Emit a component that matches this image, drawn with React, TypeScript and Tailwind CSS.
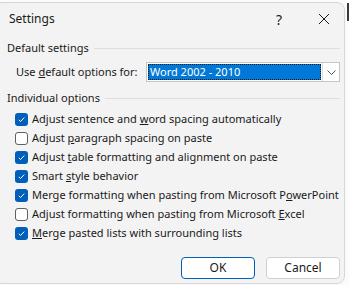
import React from "react";

const font = { fontFamily: '"Segoe UI", "Noto Sans", sans-serif' };

type Opt = { pre: string; key: string; post: string; checked: boolean };

const options: Opt[] = [
  { pre: "Adjust sentence and ", key: "w", post: "ord spacing automatically", checked: true },
  { pre: "Adjust ", key: "p", post: "aragraph spacing on paste", checked: false },
  { pre: "Adjust ", key: "t", post: "able formatting and alignment on paste", checked: true },
  { pre: "Smart ", key: "s", post: "tyle behavior", checked: true },
  { pre: "Merge formatting when pasting from Microsoft P", key: "o", post: "werPoint", checked: true },
  { pre: "Adjust formatting when pasting from Microsoft ", key: "E", post: "xcel", checked: false },
  { pre: "", key: "M", post: "erge pasted lists with surrounding lists", checked: true },
];

function Check({ on }: { on: boolean }) {
  if (!on)
    return (
      <span className="w-[13px] h-[13px] rounded-[3px] border border-[#5f5f5f] bg-white shrink-0" />
    );
  return (
    <span className="w-[13px] h-[13px] rounded-[3px] bg-[#005fb8] shrink-0 flex items-center justify-center">
      <svg width="9" height="9" viewBox="0 0 9 9">
        <path d="M1.8 4.8 L3.6 6.5 L7.2 2.6" fill="none" stroke="white" strokeWidth="1" />
      </svg>
    </span>
  );
}

function GroupTitle({ label }: { label: string }) {
  return (
    <div className="flex items-center h-[16px]">
      <span className="text-[11px] text-[#1a1a1a] whitespace-nowrap">{label}</span>
      <div className="flex-1 ml-[5px] h-px bg-[#dedede]" />
    </div>
  );
}

export default function App() {
  return (
    <div className="w-[349px] h-[285px] overflow-hidden bg-[#fbfbfb] relative" style={font}>
      <div className="absolute right-[0px] top-[3px] w-[2px] h-[18px] bg-[#3a3a3a]" />
      <div className="mt-[2px] ml-[-6px] w-[351px] h-[282px] rounded-[8px] border border-[#d6d6d6] bg-[#f3f3f3] pl-[12px] pr-[4px]">
        <div className="flex items-center h-[32px]">
          <span className="text-[12px] text-[#1a1a1a] ml-[2px]">Settings</span>
          <span className="ml-auto text-[14px] text-[#1a1a1a] mr-[36px]">?</span>
          <svg width="12" height="12" viewBox="0 0 12 12" className="mr-[10px]">
            <path d="M1 1 L11 11 M11 1 L1 11" stroke="#1a1a1a" strokeWidth="1" />
          </svg>
        </div>

        <div className="mt-[5px]">
          <GroupTitle label="Default settings" />
        </div>

        <div className="mt-[6px] flex items-center h-[20px] pl-[9px]">
          <span className="text-[11px] text-[#1a1a1a] whitespace-nowrap">
            Use <span className="underline">d</span>efault options for:
          </span>
          <div className="ml-auto w-[194px] h-[20px] border border-[#c6c6c6] bg-white flex items-stretch">
            <div className="flex-1 m-[1px] bg-[#0078d7] outline outline-1 outline-dotted outline-[#1a1a1a] -outline-offset-1 flex items-center pl-[2px]">
              <span className="text-[11px] text-white whitespace-nowrap">Word 2002 - 2010</span>
            </div>
            <div className="w-[17px] border-l border-[#dcdcdc] flex items-center justify-center">
              <svg width="9" height="5" viewBox="0 0 9 5">
                <path d="M0.5 0.5 L4.5 4.5 L8.5 0.5" fill="none" stroke="#555" strokeWidth="1" />
              </svg>
            </div>
          </div>
        </div>

        <div className="mt-[8px]">
          <GroupTitle label="Individual options" />
        </div>

        <div className="mt-[4px] flex flex-col pl-[8px]">
          {options.map((o) => (
            <div key={o.pre + o.post} className="flex items-center h-[19px] gap-[4px]">
              <Check on={o.checked} />
              <span className="text-[11px] text-[#1a1a1a] whitespace-nowrap">
                {o.pre}
                <span className="underline">{o.key}</span>
                {o.post}
              </span>
            </div>
          ))}
        </div>

        <div className="mt-[14px] flex justify-end gap-[11px]">
          <button className="w-[74px] h-[22px] rounded-[4px] bg-white border border-[#005fb8] text-[12px] text-[#1a1a1a]">
            OK
          </button>
          <button className="w-[74px] h-[22px] rounded-[4px] bg-white border border-[#d0d0d0] text-[12px] text-[#1a1a1a]">
            Cancel
          </button>
        </div>
      </div>
    </div>
  );
}
